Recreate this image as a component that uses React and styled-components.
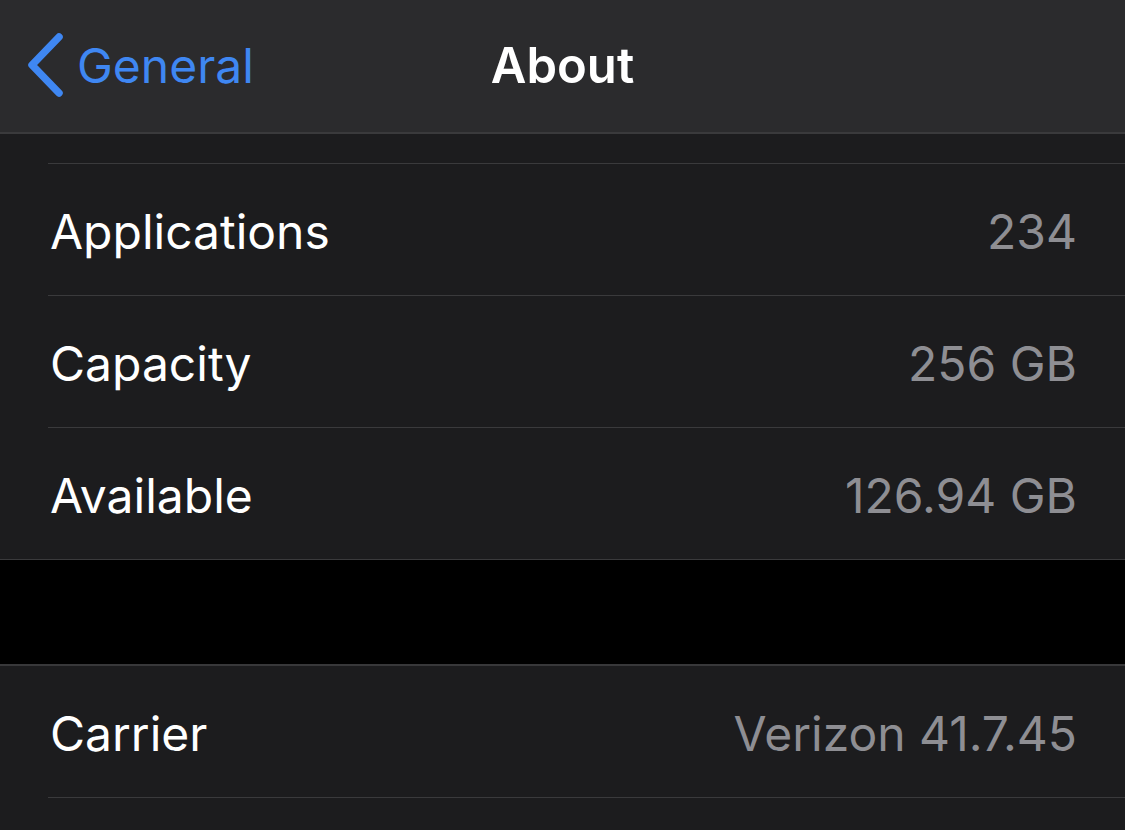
import React from "react";
import styled, { createGlobalStyle } from "styled-components";

const GlobalStyle = createGlobalStyle`
  html, body {
    margin: 0;
    padding: 0;
    background: #000;
  }
  body {
    font-family: Inter, "Open Sans", "Liberation Sans", sans-serif;
    -webkit-font-smoothing: antialiased;
  }
`;

const Screen = styled.div`
  width: 1125px;
  height: 830px;
  overflow: hidden;
  background: #000;
  display: flex;
  flex-direction: column;
`;

const NavBar = styled.header`
  position: relative;
  height: 132px;
  flex-shrink: 0;
  background: #2b2b2d;
  border-bottom: 2px solid #3a3a3c;
  display: flex;
  align-items: center;
  justify-content: center;
`;

const BackButton = styled.div`
  position: absolute;
  left: 26px;
  top: 0;
  bottom: 0;
  display: flex;
  align-items: center;
  gap: 11px;
  color: #3f87f2;
  font-size: 48px;
  padding-bottom: 2px;
`;

const Title = styled.h1`
  margin: 0;
  color: #fff;
  font-size: 49px;
  font-weight: 600;
  padding-bottom: 2px;
`;

const Group = styled.section`
  background: #1c1c1e;
  border-top: ${(p) => (p.topBorder ? "2px solid #38383a" : "none")};
  flex-shrink: 0;
`;

const Row = styled.div`
  height: ${(p) => p.height || 132}px;
  display: flex;
  align-items: center;
  justify-content: space-between;
  padding: 2px 48px 0 50px;
  box-sizing: border-box;
  position: relative;

  &::after {
    content: "";
    position: absolute;
    bottom: 0;
    right: 0;
    left: ${(p) => (p.fullLine ? 0 : 48)}px;
    height: 1px;
    background: #3a3a3c;
  }
`;

const Label = styled.span`
  color: #fff;
  font-size: 48px;
`;

const Value = styled.span`
  color: #8e8e93;
  font-size: 48px;
`;

const Spacer = styled.div`
  height: 104px;
  background: #000;
  flex-shrink: 0;
`;

const Chevron = () => (
  <svg width="40" height="66" viewBox="0 0 40 66">
    <path
      d="M33 5 L6 33 L33 61"
      fill="none"
      stroke="#3f87f2"
      strokeWidth="7.5"
      strokeLinecap="round"
      strokeLinejoin="round"
    />
  </svg>
);

const rows = [
  { label: "Applications", value: "234" },
  { label: "Capacity", value: "256 GB" },
  { label: "Available", value: "126.94 GB" },
];

export default function App() {
  return (
    <Screen>
      <GlobalStyle />
      <NavBar>
        <BackButton>
          <Chevron />
          <span>General</span>
        </BackButton>
        <Title>About</Title>
      </NavBar>
      <Group>
        <Row height={30} />
        {rows.map((r, i) => (
          <Row key={r.label} fullLine={i === rows.length - 1}>
            <Label>{r.label}</Label>
            <Value>{r.value}</Value>
          </Row>
        ))}
      </Group>
      <Spacer />
      <Group topBorder>
        <Row>
          <Label>Carrier</Label>
          <Value>Verizon 41.7.45</Value>
        </Row>
        <Row height={40} />
      </Group>
    </Screen>
  );
}
